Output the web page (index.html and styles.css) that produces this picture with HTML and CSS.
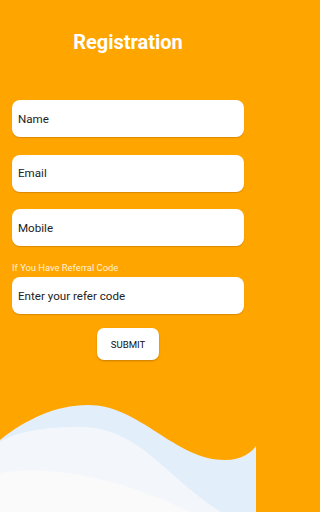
FILE: index.html
```html
<!DOCTYPE html>
<html lang="en">
<head>
<meta charset="utf-8">
<title>Registration</title>
<link rel="stylesheet" href="styles.css">
</head>
<body>
<div class="screen">
  <svg class="waves" viewBox="0 0 256 112" width="256" height="112" aria-hidden="true">
    <path fill="#E3EEFB" d="M0,40 C25,20 55,5 88,5 C140,5 175,60 225,60 C242,60 252,52 256,46 L256,112 L0,112 Z"/>
    <path fill="#F3F7FC" d="M0,42 C20,30 50,27 80,27 C120,27 145,50 170,72 C190,90 208,104 221,112 L0,112 Z"/>
    <path fill="#FAFAFA" d="M0,73 C30,68 70,70 128,87 C150,94 170,103 190,112 L0,112 Z"/>
  </svg>
  <main class="content">
    <h1 class="title">Registration</h1>
    <form class="form">
      <div class="field">Name</div>
      <div class="field">Email</div>
      <div class="field">Mobile</div>
      <label class="label">If You Have Referral Code</label>
      <div class="field">Enter your refer code</div>
      <div class="actions"><button type="button" class="submit">SUBMIT</button></div>
    </form>
  </main>
</div>
</body>
</html>
```
FILE: styles.css
```css
* { box-sizing: border-box; }
html, body { margin: 0; padding: 0; }
body {
  font-family: Roboto, "Noto Sans", sans-serif;
  background: #FFA500;
}
.screen {
  position: relative;
  width: 256px;
  height: 512px;
  background: #FFA500;
  overflow: hidden;
}
.waves {
  position: absolute;
  left: 0;
  bottom: 0;
  display: block;
}
.content {
  position: relative;
  padding: 0 12px;
}
.title {
  margin: 30px 0 0;
  font-size: 20px;
  line-height: 24px;
  font-weight: 700;
  color: #fff;
  text-align: center;
}
.form {
  display: flex;
  flex-direction: column;
  margin-top: 46px;
}
.field {
  height: 37px;
  background: #fff;
  border-radius: 8px;
  padding-left: 6px;
  display: flex;
  align-items: center;
  font-size: 11.6px;
  color: #222;
  box-shadow: 0 1px 1px rgba(150, 90, 0, 0.35);
  margin-bottom: 17.5px;
}
.label {
  font-size: 9.4px;
  line-height: 12px;
  color: #FFF1D6;
  margin-top: -1.5px;
  margin-bottom: 3px;
}
.actions {
  display: flex;
  justify-content: center;
  margin-top: -3.5px;
}
.submit {
  width: 62px;
  height: 32px;
  border: none;
  border-radius: 7px;
  background: #fff;
  font-family: Roboto, "Noto Sans", sans-serif;
  font-size: 9.6px;
  color: #111;
  padding: 0;
  box-shadow: 0 1px 2px rgba(120, 70, 0, 0.4);
}
```
